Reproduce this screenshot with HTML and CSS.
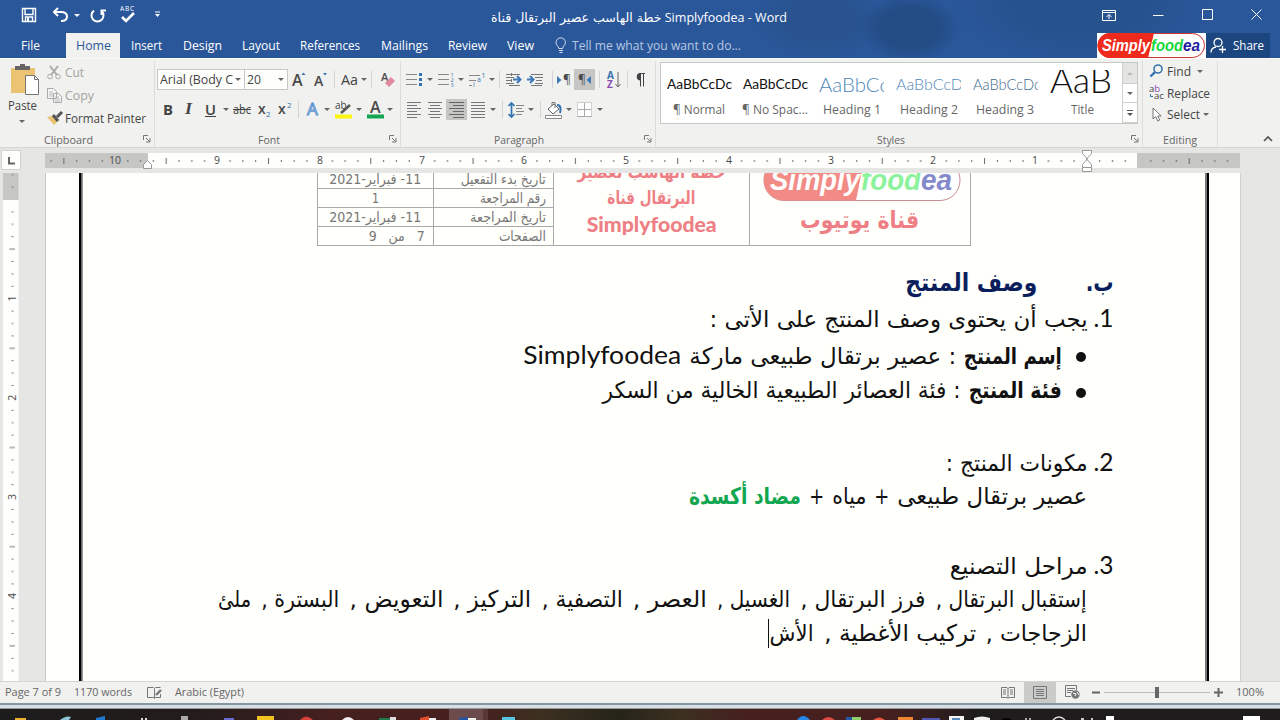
FILE: index.html
```html
<!DOCTYPE html>
<html lang="en">
<head>
<meta charset="utf-8">
<title>Simplyfoodea - Word</title>
<link rel="stylesheet" href="styles.css">
</head>
<body>
<div class="app">
  <header class="top">
    <div class="titlebar">
      <svg class="ic" width="16" height="16" viewBox="0 0 16 16"><path d="M1.500 1.500h13v13h-13z M4 1.500v6h8v-6 M4.500 14v-4h7v4" fill="none" stroke="#fff" stroke-width="1.400"/><path d="M6 11h2v3h-2z" fill="#fff"/></svg>
      <svg class="ic" width="17" height="16" viewBox="0 0 17 16"><path d="M6 1L2 5l4 4M2 5h7c4 0 6 2 6 4.500S13 14 9 14" fill="none" stroke="#fff" stroke-width="2"/></svg>
      <i class="caret light"></i>
      <svg class="ic" width="17" height="17" viewBox="0 0 17 17"><path d="M4.500 4A6 6 0 1 0 12 3.600M4.500 8V3.500H0" fill="none" stroke="#fff" stroke-width="2" transform="translate(17 0)scale(-1 1)"/></svg>
      <svg class="ic" width="17" height="20" viewBox="0 0 17 20"><text x="1" y="6" font-size="6.500" textLength="14" fill="#fff">ABC</text><path d="M3 12l4 4 8-8" fill="none" stroke="#fff" stroke-width="2.600"/></svg>
      <svg class="ic" width="8" height="8"><path d="M1 1h5" stroke="#fff"/><path d="M1 3h5l-2.500 3z" fill="#fff"/></svg>
      <div class="doc-title" dir="ltr"><span class="fit" data-w="296"><bdi class="ar">خطة الهاسب عصير البرتقال قناة</bdi> Simplyfoodea - Word</span></div>
      <svg class="ic" width="15" height="12"><path d="M.5 1.500h13v10H.5zM.5 3.500h13M7 10V5.500M4.500 8L7 5.500 9.500 8" fill="none" stroke="#fff"/></svg>
      <svg class="ic" width="11" height="12"><path d="M0 6.500h10.500" stroke="#fff"/></svg>
      <svg class="ic" width="12" height="12"><path d="M.5 .5h10v10H.5z" fill="none" stroke="#fff"/></svg>
      <svg class="ic" width="12" height="12"><path d="M.5 .5l10 10M10.500 .5l-10 10" stroke="#fff"/></svg>
    </div>
    <nav class="tabs">
      <span class="fit" data-w="19">File</span>
      <span class="tab-on"><span class="fit" data-w="35">Home</span></span>
      <span class="fit" data-w="31">Insert</span>
      <span class="fit" data-w="39">Design</span>
      <span class="fit" data-w="38">Layout</span>
      <span class="fit" data-w="60">References</span>
      <span class="fit" data-w="47">Mailings</span>
      <span class="fit" data-w="39">Review</span>
      <span class="fit" data-w="27">View</span>
      <svg class="ic" width="12" height="17"><path d="M3.800 11.500C3.800 9 1 8.500 1 5.500a4.700 4.700 0 0 1 9.400 0c0 3-2.700 3.500-2.700 6zM4 13.500h4M4.500 15.500h3" fill="none" stroke="#d5dfee"/></svg>
      <span class="fit tell" data-w="169">Tell me what you want to do...</span>
      <svg class="brand" width="109" height="25" viewBox="0 0 109 25"><path d="M0 0h109v25H0z" fill="#fff"/><rect x="1" y=".5" width="106.500" height="24" rx="12" fill="#fff" stroke="#c33"/><path d="M13 0h44l-6 25H13a12.500 12.500 0 0 1 0-25z" fill="#ee2a1c"/><g font-family="Liberation Sans" font-size="16" font-weight="bold" font-style="italic"><text x="5" y="17.500" textLength="48" lengthAdjust="spacingAndGlyphs" fill="#fff">Simply</text><text x="54" y="17.500" textLength="32" lengthAdjust="spacingAndGlyphs" fill="#16d83a">food</text><text x="86" y="17.500" textLength="17" lengthAdjust="spacingAndGlyphs" fill="#1c1c9c">ea</text></g></svg>
      <span class="share"><svg class="ic" width="18" height="17"><circle cx="8" cy="5.500" r="4" fill="none" stroke="#fff" stroke-width="1.300"/><path d="M1 15.500c0-3 2-5 5-5.500M9 12.500h7M12.500 9v7" fill="none" stroke="#fff" stroke-width="1.300"/></svg><span class="fit" data-w="31">Share</span></span>
    </nav>
  </header>

  <section class="ribbon">
    <div class="group clipboard">
      <div class="g-body clip-body">
        <div class="paste">
          <svg width="32" height="34"><path d="M1 5h24v25H1z" fill="#ecc373"/><path d="M5 3h5V1h5v2h5v4H5z" fill="#666"/><path d="M15.500 12.500h9l4 4v15h-13z" fill="#fff" stroke="#777"/><path d="M24.500 12.500v4h4" fill="none" stroke="#777"/></svg>
          <span class="fit" data-w="29">Paste</span>
          <i class="caret"></i>
        </div>
        <div class="clip-list">
          <div class="off"><svg width="15" height="15"><path d="M3 1l7 9M11 1L4 10" stroke="#aaa" stroke-width="2"/><circle cx="3" cy="11.500" r="2.300" fill="none" stroke="#aaa"/><circle cx="11" cy="11.500" r="2.300" fill="none" stroke="#aaa"/></svg><span class="fit" data-w="19">Cut</span></div>
          <div class="off"><svg width="15" height="15"><path d="M.5 .5h6l3 3v7h-9zM6.500 5.500h5l3 3v6h-8z" fill="#f4f4f3" stroke="#aaa"/><path d="M2 4h4M2 6h4M2 8h4M8 9h4M8 11h5M8 13h5" stroke="#bbb"/></svg><span class="fit" data-w="29">Copy</span></div>
          <div><svg width="16" height="15"><path d="M0 6l6-1 5 5-4 4z" fill="#ecc373"/><path d="M6 4l5 6M10 6l5-5" stroke="#555" stroke-width="3"/></svg><span class="fit" data-w="81">Format Painter</span></div>
        </div>
      </div>
      <div class="g-foot"><span class="fit" data-w="49">Clipboard</span><svg class="launch" width="8" height="8"><use href="#launch"/></svg></div>
    </div>

    <div class="group font">
      <div class="g-body">
        <div class="row font1">
          <span class="combo"><span class="fit" data-w="73">Arial (Body C</span><i class="caret"></i></span>
          <span class="combo"><span class="fit" data-w="14">20</span><i class="caret"></i></span>
          <svg width="16" height="18"><text class="b" x="0" y="15" font-size="16">A</text><path d="M9.500 4h4l-2-2.500z" fill="#3572b0"/></svg>
          <svg width="16" height="18"><text class="b" x="0" y="15" font-size="14">A</text><path d="M9 2h4l-2 2.500z" fill="#3572b0"/></svg>
          <i class="sep"></i>
          <span class="fit big" data-w="17">Aa</span><i class="caret"></i>
          <i class="sep"></i>
          <svg width="15" height="16"><text x="0" y="9" font-size="11" class="b">A</text><path d="M4 11l6-6 4 4-6 6z" fill="#e28aa0"/></svg>
        </div>
        <div class="row font2">
          <b class="fit glyph" data-w="10">B</b>
          <i class="fit glyph serif" data-w="7">I</i>
          <u class="fit glyph" data-w="11">U</u><i class="caret"></i>
          <s class="fit" data-w="18">abc</s>
          <svg width="14" height="18"><text class="b" x="0" y="13" font-size="14">x</text><text x="8" y="16" font-size="8" fill="#3572b0">2</text></svg>
          <svg width="15" height="18"><text class="b" x="0" y="13" font-size="14">x</text><text x="9" y="7" font-size="8" fill="#3572b0">2</text></svg>
          <i class="sep"></i>
          <svg width="15" height="17"><text x="1" y="14" font-size="17" fill="#fff" stroke="#5b93cf">A</text></svg><i class="caret"></i>
          <svg width="18" height="18"><text x="0" y="8" font-size="10" fill="#444">ab</text><path d="M6 12l9-8" stroke="#555" stroke-width="2.400"/><path d="M0 13.500h17v4H0z" fill="#fcf510"/></svg><i class="caret"></i>
          <svg width="18" height="18"><text x="3" y="12" font-size="16" class="b">A</text><path d="M0 13.500h17v4H0z" fill="#12a650"/></svg><i class="caret"></i>
        </div>
      </div>
      <div class="g-foot"><span class="fit" data-w="22">Font</span><svg class="launch" width="8" height="8"><use href="#launch"/></svg></div>
    </div>

    <div class="group para">
      <div class="g-body">
        <div class="row para1">
          <svg width="17" height="16"><path d="M0 2.500h11M0 7.500h11M0 12.500h11" stroke="#888"/><path d="M13 1h3v3h-3zM13 6h3v3h-3zM13 11h3v3h-3z" fill="#3572b0"/></svg><i class="caret"></i>
          <svg width="17" height="16"><path d="M0 2.500h11M0 7.500h11M0 12.500h11" stroke="#888"/><text x="12.500" y="5" font-size="5.500" fill="#3572b0">1</text><text x="12.500" y="10" font-size="5.500" fill="#3572b0">2</text><text x="12.500" y="15" font-size="5.500" fill="#3572b0">3</text></svg><i class="caret"></i>
          <svg width="17" height="16"><path d="M0 3.500h11M0 8.500h7M0 13.500h3" stroke="#888"/><text x="12.500" y="6" font-size="7" fill="#3572b0">1</text><text x="8" y="10" font-size="7" fill="#3572b0">a</text><text x="4" y="15" font-size="7" fill="#3572b0">i</text></svg><i class="caret"></i>
          <i class="sep"></i>
          <svg width="16" height="14"><path d="M0 1.500h14M0 4.500h8M0 7.500h6M0 10.500h8M3 12.500h11" stroke="#777"/><path d="M5.500 0v14" stroke="#777" stroke-dasharray="1 1"/><path d="M7 6.500h7M11 3l3.500 3.500L11 10" fill="none" stroke="#3f78b8" stroke-width="2"/></svg>
          <svg width="16" height="14"><path d="M4 1.500h12M8 4.500h8M9 7.500h6M8 10.500h8M4 12.500h11" stroke="#777"/><path d="M0 6.500h6M3 3l3.500 3.500L3 10" fill="none" stroke="#3f78b8" stroke-width="2"/></svg>
          <i class="sep"></i>
          <svg width="15" height="14"><path d="M0 3v8l4.500-4z" fill="#3f78b8"/><text x="6" y="11" font-size="12">¶</text></svg>
          <span class="on"><svg width="15" height="14"><path d="M14 3v8L9.500 7z" fill="#3f78b8"/><text x="1" y="11" font-size="12">¶</text></svg></span>
          <i class="sep"></i>
          <svg width="15" height="18"><text x="0" y="8" font-size="10" font-weight="bold" fill="#3572b0">A</text><text x="0" y="17" font-size="10" font-weight="bold" fill="#8a4bb0">Z</text><path d="M11 1v15M8.500 13l2.500 3 2.500-3" fill="none" stroke="#666"/></svg>
          <i class="sep"></i>
          <svg width="12" height="18"><path d="M5 2.500h6M6.500 2.500v13M9.500 2.500v13" stroke="#444"/><path d="M6.500 2v7.500a3.700 3.700 0 0 1 0-7.500z" fill="#444"/></svg>
        </div>
        <div class="row para2">
          <svg width="15" height="16"><path d="M0 .5h14M0 3.500h10M0 6.500h14M0 9.500h10M0 12.500h14M0 15.500h10" stroke="#777"/></svg>
          <svg width="15" height="16"><path d="M0 .5h14M2 3.500h10M0 6.500h14M2 9.500h10M0 12.500h14M2 15.500h10" stroke="#777"/></svg>
          <span class="on"><svg width="15" height="16"><path d="M0 .5h15M4 3.500h11M0 6.500h15M4 9.500h11M0 12.500h15M4 15.500h11" stroke="#666"/></svg></span>
          <svg width="15" height="16"><path d="M0 .5h14M0 3.500h14M0 6.500h14M0 9.500h14M0 12.500h14M0 15.500h14" stroke="#777"/></svg><i class="caret"></i>
          <i class="sep"></i>
          <svg width="17" height="16"><path d="M3.500 1v14M.5 4l3-3 3 3M.5 12l3 3 3-3" fill="none" stroke="#3572b0" stroke-width="1.700"/><path d="M8 3.500h8M8 6.500h6M8 9.500h8M8 12.500h6" stroke="#888"/></svg><i class="caret"></i>
          <i class="sep"></i>
          <svg width="18" height="18"><path d="M3 8l6-5 5 5-6 5z" fill="#fff" stroke="#666"/><path d="M7 5V1.500h3V7" fill="none" stroke="#777"/><path d="M12 4c4 0 4 4 3 8" fill="none" stroke="#3572b0" stroke-width="2"/><path d="M.5 14.500h16v3H.5z" fill="#fff" stroke="#888"/></svg><i class="caret"></i>
          <svg width="16" height="16"><path d="M.5 .5h14v14H.5z" fill="#fff" stroke="#aaa" stroke-dasharray="1 1"/><path d="M7.500 1v13M1 7.500h13M0 14.500h15" stroke="#aaa"/></svg><i class="caret"></i>
        </div>
      </div>
      <div class="g-foot"><span class="fit" data-w="50">Paragraph</span><svg class="launch" width="8" height="8"><use href="#launch"/></svg></div>
    </div>

    <div class="group styles">
      <div class="gallery">
        <div class="style"><div class="sample"><span class="fit" data-w="65">AaBbCcDc</span></div><span class="fit" data-w="52">¶ Normal</span></div>
        <div class="style"><div class="sample"><span class="fit" data-w="65">AaBbCcDc</span></div><span class="fit" data-w="66">¶ No Spac...</span></div>
        <div class="style"><div class="sample h1"><span class="fit" data-w="70">AaBbCc</span></div><span class="fit" data-w="58">Heading 1</span></div>
        <div class="style"><div class="sample h2"><span class="fit" data-w="67">AaBbCcD</span></div><span class="fit" data-w="58">Heading 2</span></div>
        <div class="style"><div class="sample h3"><span class="fit" data-w="68">AaBbCcDc</span></div><span class="fit" data-w="58">Heading 3</span></div>
        <div class="style"><div class="sample ttl"><span class="fit" data-w="62">AaB</span></div><span class="fit" data-w="23">Title</span></div>
        <div class="scroll"><span class="dim"><i class="caret up"></i></span><span><i class="caret"></i></span><span><svg width="7" height="8"><path d="M0 1.500h6" stroke="#555"/><path d="M0 4h6l-3 3z" fill="#555"/></svg></span></div>
      </div>
      <div class="g-foot"><span class="fit" data-w="28">Styles</span><svg class="launch" width="8" height="8"><use href="#launch"/></svg></div>
    </div>

    <div class="group editing">
      <div class="g-body edit-list">
        <div><svg width="16" height="15"><circle cx="9" cy="5" r="4" fill="none" stroke="#3572b0" stroke-width="1.600"/><path d="M6 8L1.500 12.500" stroke="#3572b0" stroke-width="2.400"/></svg><span class="fit" data-w="24">Find</span><i class="caret"></i></div>
        <div><svg width="16" height="16"><text x="0" y="7" font-size="9.500" fill="#444">a<tspan fill="#8a4bb0">b</tspan></text><text x="5" y="14" font-size="9.500" fill="#444">ac</text><path d="M1.500 9v2.500H4" fill="none" stroke="#3572b0"/></svg><span class="fit" data-w="43">Replace</span></div>
        <div><svg width="14" height="15"><path d="M4 1v11l2.700-2.500 2 4.500 2-1-2-4h3.500z" fill="#fff" stroke="#777"/></svg><span class="fit" data-w="33">Select</span><i class="caret near"></i></div>
      </div>
      <div class="g-foot"><span class="fit" data-w="34">Editing</span></div>
    </div>
    <div class="collapse"><svg width="10" height="7"><path d="M1 6l4-4 4 4" fill="none" stroke="#555" stroke-width="1.700"/></svg></div>
  </section>

  <div class="hruler">
    <div class="corner"><svg width="18" height="18"><path d="M7 6v6.500h6" fill="none" stroke="#666" stroke-width="2"/></svg></div>
    <svg width="1196" height="26" viewBox="45 0 1196 26">
      <defs>
        <pattern id="ht" x="1138" y="0" width="102.300" height="26" patternUnits="userSpaceOnUse"><path d="M12.800 12v2M25.600 12v2M38.400 12v2M51.200 10v6M64 12v2M76.800 12v2M89.600 12v2" stroke="#666"/></pattern>
        <symbol id="launch" overflow="visible"><path d="M.5 5V.5H5M3 3l3.500 3.500M7 3v4H3" fill="none" stroke="#777"/></symbol>
      </defs>
      <path d="M45 5h1195v15H45z" fill="#c6c6c4"/><path d="M148 5h989v15H148z" fill="#fefefc"/>
      <path d="M48 5h1087v15H48zM1142 5h92v15h-92z" fill="url(#ht)"/>
      <g font-size="10.500" text-anchor="middle"><text x="115" y="16">10</text><text x="217" y="16">9</text><text x="320" y="16">8</text><text x="422" y="16">7</text><text x="524" y="16">6</text><text x="626" y="16">5</text><text x="729" y="16">4</text><text x="831" y="16">3</text><text x="933" y="16">2</text><text x="1035" y="16">1</text></g>
      <path d="M143.500 20.500v-4l4-4 4 4v4z" fill="#fff" stroke="#999"/>
      <path d="M1082.500 2.500h9v3l-4.500 5-4.500-5zM1082.500 19.500v-3l4.500-5 4.500 5v3zM1082.500 19.500h9v4h-9z" fill="#fff" stroke="#999"/>
    </svg>
  </div>

  <main class="work">
    <svg class="vruler" width="45" height="508" viewBox="0 173 45 508">
      <defs><pattern id="vt" x="0" y="199.500" width="20" height="99.200" patternUnits="userSpaceOnUse"><path d="M11.500 12.400h2M11.500 24.800h2M11.500 37.200h2M9.500 49.600h5.500M11.500 62h2M11.500 74.400h2M11.500 86.800h2" stroke="#777"/></pattern></defs>
      <path d="M3 173h15.500v27H3z" fill="#c6c6c4"/><path d="M3 200h15.500v481H3z" fill="#fefefc"/>
      <path d="M0 174h20v507H0z" fill="url(#vt)"/>
      <g font-size="10.500" text-anchor="middle"><text transform="translate(15.500 298.500)rotate(-90)">1</text><text transform="translate(15.500 397.700)rotate(-90)">2</text><text transform="translate(15.500 497)rotate(-90)">3</text><text transform="translate(15.500 596)rotate(-90)">4</text></g>
    </svg>
    <article class="page" dir="rtl">
      <div class="edge right"></div>
      <div class="sheet">
        <div class="head">
          <div class="cell logo-cell">
            <svg width="192" height="29" viewBox="1 10 192 29" direction="ltr"><rect x="1" y="-3" width="196" height="40.500" rx="20" fill="#fff" stroke="#c98a92"/><path d="M21-3h80l-8 40.500H21A20 20 0 0 1 21-3z" fill="#f28b86"/><g font-family="Liberation Sans" font-size="29" font-weight="bold" font-style="italic"><text x="7" y="27" textLength="90" lengthAdjust="spacingAndGlyphs" fill="#fff">Simply</text><text x="98" y="27" textLength="60" lengthAdjust="spacingAndGlyphs" fill="#8df29c">food</text><text x="158" y="27" textLength="31" lengthAdjust="spacingAndGlyphs" fill="#8489cb">ea</text></g></svg>
            <span class="fit channel" data-w="119">قناة يوتيوب</span>
          </div>
          <div class="cell plan"><span class="fit" data-w="148">خطة الهاسب لعصير</span><span class="fit" data-w="88">البرتقال قناة</span><span class="fit lat" data-w="130">Simplyfoodea</span></div>
          <div class="meta">
            <div><span class="fit" data-w="85">تاريخ بدء التفعيل</span></div><div class="mid"><span class="fit" data-w="92">11- فبراير-2021</span></div>
            <div><span class="fit" data-w="66">رقم المراجعة</span></div><div class="mid"><span class="fit" data-w="7">1</span></div>
            <div><span class="fit" data-w="76">تاريخ المراجعة</span></div><div class="mid"><span class="fit" data-w="92">11- فبراير-2021</span></div>
            <div><span class="fit" data-w="47">الصفحات</span></div><div class="mid pages"><span class="fit" data-w="56">7 &nbsp; من &nbsp; 9</span></div>
          </div>
        </div>
        <div class="line title"><span class="fit mark" data-w="28">ب.</span><span class="fit" data-w="132">وصف المنتج</span></div>
        <div class="line first"><span class="fit num" data-w="20">1.</span><span class="fit" data-w="378">يجب أن يحتوى وصف المنتج على الأتى :</span></div>
        <div class="line item"><i class="dot"></i><b class="fit" data-w="98">إسم المنتج</b><span class="fit" data-w="267">: عصير برتقال طبيعى ماركة</span><span class="fit lat" data-w="158">Simplyfoodea</span></div>
        <div class="line item"><i class="dot"></i><b class="fit" data-w="93">فئة المنتج</b><span class="fit" data-w="358">: فئة العصائر الطبيعية الخالية من السكر</span></div>
        <div class="line second"><span class="fit num" data-w="20">2.</span><span class="fit" data-w="142">مكونات المنتج :</span></div>
        <div class="line body sum"><span class="fit" data-w="190">عصير برتقال طبيعى</span><span class="fit" data-w="15">+</span><span class="fit" data-w="34">مياه</span><span class="fit" data-w="15">+</span><b class="fit green" data-w="112">مضاد أكسدة</b></div>
        <div class="line third"><span class="fit num" data-w="20">3.</span><span class="fit" data-w="138">مراحل التصنيع</span></div>
        <div class="line body steps"><span class="fit" data-w="151">إستقبال البرتقال ,</span><span class="fit" data-w="125">فرز البرتقال ,</span><span class="fit" data-w="73">الغسيل ,</span><span class="fit" data-w="74">العصر ,</span><span class="fit" data-w="81">التصفية ,</span><span class="fit" data-w="78">التركيز ,</span><span class="fit" data-w="94">التعويض ,</span><span class="fit" data-w="78">البسترة ,</span><span class="fit" data-w="33">ملئ</span></div>
        <div class="line body steps last"><span class="fit" data-w="101">الزجاجات ,</span><span class="fit" data-w="152">تركيب الأغطية ,</span><span class="fit" data-w="44">الأش</span><i class="cursor"></i></div>
      </div>
      <div class="edge left"></div>
    </article>
  </main>

  <footer class="status">
    <span class="fit" data-w="56">Page 7 of 9</span>
    <span class="fit" data-w="58">1170 words</span>
    <svg width="16" height="14"><path d="M.5 1.500h6l1 1v10l-1-1h-6zM7.500 2.500l1-1h5M7.500 12.500l1-1h5V8" fill="none" stroke="#777"/><path d="M9 9l5-5" stroke="#777" stroke-width="2.400"/></svg>
    <span class="fit" data-w="69">Arabic (Egypt)</span>
    <svg width="15" height="13"><path d="M.5 1.500h5.500l1 1 1-1h5.500v10H8l-1 1-1-1H.5zM7 2v10M2 4h3M2 6h3M2 8h3M9 4h3M9 6h3M9 8h3" fill="none" stroke="#777"/></svg>
    <span class="view-on"><svg width="15" height="13"><path d="M.5 .5h13v12H.5zM3 3.500h8M3 5.500h8M3 7.500h8M3 9.500h8" fill="none" stroke="#777"/></svg></span>
    <svg width="16" height="15"><path d="M6 11.500H.5V.5h11V5M2 3.500h8M2 5.500h6M2 7.500h4" fill="none" stroke="#777"/><circle cx="10.500" cy="9.500" r="4.200" fill="#777"/><path d="M8 8l3 1-1 2M12 7l2 3" stroke="#fff" fill="none"/></svg>
    <svg width="132" height="13"><path d="M0 6.500h8M122 6.500h9M126.500 2v9" stroke="#666" stroke-width="2"/><path d="M12 6.500h106" stroke="#bbb"/><path d="M63 1h4v11h-4z" fill="#666"/></svg>
    <span class="fit" data-w="28">100%</span>
  </footer>
  <div class="winedge"></div>
  <div class="taskbar">
    <svg width="1280" height="11"><path d="M449 0h34v11h-34z" fill="#6b4b4c"/><path d="M483 0h5v11h-5z" fill="#5a3838"/>
      <path d="M15 9h11v2H15z" fill="#eab030"/><path d="M60 11q6-5 11-3l-2 3z" fill="#8fc4d8"/><path d="M96 9l9-2v4h-9z" fill="#1f78d0"/><path d="M141 9h2v2h-2zM145 9h2v2h-2z" fill="#ddd"/><path d="M181 7h7v4h-7z" fill="#aaa"/><path d="M224 9h10v2h-10z" fill="#6a6bd0"/><path d="M257 7h17v4h-17z" fill="#f2c320"/><path d="M300 11q6-7 13 0z" fill="#d9423c"/><path d="M342 11q6-6 12 0z" fill="#eee"/><path d="M379 9h11v2h-11z" fill="#1f7a4c"/><path d="M390 8h6v3h-6z" fill="#ddd"/><path d="M420 9l9-2v4h-9z" fill="#e34f2a"/><path d="M429 9h7v2h-7z" fill="#eee"/><path d="M459 9l9-1v3h-9z" fill="#2455a5"/><path d="M468 9h8v2h-8z" fill="#eee"/><path d="M502 8h13v3h-13z" fill="#55c5e0"/><path d="M797 11q6-8 13 0z" fill="#2386e8"/><path d="M822 11q6-6 13 0z" fill="#e04a40"/><path d="M846 8h6v3h-6z" fill="#2a58a8"/><path d="M852 8h9v3h-9z" fill="#8ccf6a"/><path d="M873 11q6-5 12 0z" fill="#e9583e"/><path d="M898 8h15v3h-15z" fill="#ee8434"/><path d="M922 9h18v2h-18z" fill="#5158b8"/><path d="M949 7h15v4h-15z" fill="#f4f4f4"/><path d="M952 9h8v2h-8z" fill="#5d8dc0"/><path d="M974 9q8-3 16 0v2h-16z" fill="#eee"/><path d="M1001 11q6-4 11 0z" fill="#000"/><path d="M1025 9h2v2h-2zM1029 9h2v2h-2z" fill="#aaa"/><path d="M1053 11q6-6 12 0" fill="none" stroke="#ddd" stroke-width="1.500"/><path d="M1081 9h3v2h-3zM1091 9h2v2h-2z" fill="#ccc"/><path d="M1106 7h8v4h-8zM1243 7h17v4h-17z" fill="#fff"/></svg>
  </div>
</div>
<script src="fit.js"></script>
</body>
</html>
```

FILE: styles.css
```css
* { box-sizing: border-box; }
body { margin: 0; font-family: "Open Sans", "Noto Sans", "DejaVu Sans", sans-serif; font-size: 12px; color: #444; overflow: hidden; }
svg { display: block; flex: none; overflow: visible; }
svg text:not([fill]) { fill: #4a4a4a; }
svg text.b { font-weight: 600; }
.app { width: 1280px; height: 720px; display: flex; flex-direction: column; overflow: hidden; background: #e6e6e4; }
.fit { display: inline-block; white-space: nowrap; flex: none; justify-self: start; transform-origin: 0 50%; }
[dir="rtl"] .fit { transform-origin: 100% 50%; }

.top { height: 58px; flex: none; color: #fff; background: radial-gradient(ellipse 50px 34px at 910px 28px, #244d86 60%, transparent 100%), radial-gradient(ellipse 130px 60px at 1080px 5px, #26528e 50%, transparent 100%), radial-gradient(ellipse 70px 40px at 820px 20px, #28538f 50%, transparent 100%), #2a579a; }
.titlebar { height: 33px; padding: 0 0 3px 21px; display: grid; align-items: center; grid-template-columns: 31px 22px 15px 30px 35px 337px 611px 51px 49px 49px 20px; }
.doc-title { font-size: 12.5px; padding-top: 4px; }
.ar { font-family: "DejaVu Sans", sans-serif; }
.tabs { height: 25px; padding-left: 21px; display: grid; align-items: center; grid-template-columns: 45px 65px 52px 59px 58px 81px 67px 59px 48px 17px 525px 109px 64px; font-size: 12.5px; }
.tab-on { height: 25px; width: 54px; padding-left: 10px; display: flex; align-items: center; background: #f1f1ef; color: #2a579a; }
.tell { color: #b8c8e2; }
.share { height: 25px; padding-left: 4px; display: flex; gap: 5px; align-items: center; background: #1c4680; }
.caret { width: 0; height: 0; display: block; flex: none; border: 3px solid transparent; border-top-color: #666; border-bottom: 0; }
.caret.up { border-top: 0; border-bottom: 3px solid #bbb; }
.caret.light { border-top-color: #fff; }

.ribbon { height: 90px; flex: none; display: grid; grid-template-columns: 155px 246px 255px 487px 75px 62px; background: #f1f1ef; border-top: 1px solid #fafafa; border-bottom: 1px solid #d6d6d4; padding-top: 2px; }
.group { border-right: 1px solid #dcdcda; height: 86px; display: flex; flex-direction: column; }
.g-body { height: 70px; flex: none; }
.g-foot { display: grid; align-items: center; height: 16px; flex: none; color: #666; font-size: 11px; }
.clip-body { display: grid; grid-template-columns: 47px 100px; }
.paste { padding: 2px 0 0 8px; display: flex; flex-direction: column; align-items: flex-start; }
.paste svg { margin-left: 2px; }
.paste .caret { margin: 5px 0 0 11px; }
.paste .fit { line-height: 18px; }
.clip-list div { height: 23px; display: grid; grid-template-columns: 18px 82px; align-items: center; }
.off { color: #a3a3a1; }
.clipboard .g-foot { padding-left: 44px; grid-template-columns: 99px 10px; }
.font .g-foot { padding-left: 103px; grid-template-columns: 131px 10px; }
.para .g-foot { padding-left: 93px; grid-template-columns: 150px 10px; }
.styles .g-foot { padding-left: 221px; grid-template-columns: 254px 10px; }
.editing .g-foot { padding-left: 20px; }
.row { height: 31px; display: grid; align-items: center; }
.font1 { padding-left: 2px; margin-top: 3px; grid-template-columns: 88px 47px 22px 20px 7px 20px 10px 10px 20px; }
.font2 { margin-top: -1px; padding-left: 8px; grid-template-columns: 22px 20px 18px 10px 25px 20px 20px 8px 18px 11px 21px 11px 20px 10px; }
.combo { display: flex; align-items: center; justify-content: space-between; height: 21px; background: #fefefd; border: 1px solid #c8c8c6; padding: 0 3px 0 2px; }
.combo + .combo { margin-right: 4px; border-left: 0; }
.sep { width: 1px; height: 17px; background: #d4d4d2; }
.big { font-size: 14px; }
.glyph { font-size: 15px; line-height: 18px; padding-bottom: 1px; }
.serif { font-family: "Liberation Serif", serif; font-weight: bold; font-size: 17px; }
u.glyph { font-weight: 600; }
.para1 { margin-top: 3px; padding-left: 5px; grid-template-columns: 21px 11px 20px 11px 20px 10px 7px 21px 25px 5px 17px 25px 8px 20px 7px 12px; }
.para2 { margin-top: -1px; padding-left: 6px; grid-template-columns: 21px 18px 25px 19px 12px 6px 20px 12px 5px 21px 11px 20px 10px; }
.on { width: 21px; height: 21px; background: #c6c6c4; display: grid; place-items: center; }
.gallery { margin: 1px 0 8px 4px; width: 478px; height: 62px; flex: none; background: #fff; border: 1px solid #c8c8c6; display: grid; grid-template-columns: 76px 76px 77px 77px 76px 79px 15px; font-size: 12px; }
.styles .g-foot { margin-top: -1px; }
.style { display: flex; flex-direction: column; align-items: center; padding-top: 7px; color: #666; }
.style > .fit { line-height: 16px; margin-top: 2px; }
.sample { width: 65px; height: 30px; line-height: 29px; overflow: hidden; font-size: 13px; color: #111; font-family: "Lato", sans-serif; }
.h1, .h2, .h3 { color: #4f88ba; font-weight: 300; font-size: 19px; }
.h2 { font-size: 16.5px; }
.h3 { color: #40698c; font-size: 15px; }
.ttl { font-size: 35px; font-weight: 300; line-height: 19px; }
.ttl .fit { line-height: 19px; }
.scroll { border-left: 1px solid #d0d0ce; display: grid; grid-template-rows: 21px 19px 20px; }
.scroll span { display: grid; place-items: center; border-bottom: 1px solid #d0d0ce; }
.scroll .dim { background: #e4e4e2; }
.edit-list { padding: 0 0 0 6px; }
.edit-list div { height: 21.500px; display: grid; align-items: center; grid-template-columns: 18px auto 1fr; column-gap: 0; }
.edit-list .caret { margin-left: 6px; }
.edit-list .near { margin-left: 3px; }
.collapse { padding: 74px 0 0 45px; }

.hruler { height: 25px; flex: none; display: grid; grid-template-columns: 45px 1196px; background: #e6e6e4; }
.corner { width: 20px; height: 20px; margin: 2px 0 0 1px; border: 1px solid #d2d2d0; background: #fefefc; }
.work { height: 508px; flex: none; display: flex; overflow: hidden; }
.page { width: 1196px; background: #fffffc; border-left: 1px solid #c8c8c6; border-right: 1px solid #d0d0ce; display: flex; font-family: "DejaVu Sans", sans-serif; }
.edge { width: 4px; flex: none; background: linear-gradient(90deg, #777 0 2px, #000 2px); }
.edge.left { background: linear-gradient(90deg, #000 0 2px, #666 2px 3px, #999 3px); }
.right { margin-right: 31px; }
.left { margin-left: 33px; }
.sheet { flex: 1; min-width: 0; }
.head { margin-right: 234px; width: 654px; height: 73px; display: grid; grid-template-columns: 221px 196px 236px; border: 1px solid #aaa; border-top: 0; color: #777; font-size: 14px; overflow: hidden; }
.cell { border-left: 1px solid #aaa; display: flex; flex-direction: column; align-items: center; overflow: hidden; }
.channel { color: #ee8085; font-weight: bold; font-size: 24px; line-height: 36px; }
.plan { color: #ee8085; font-weight: bold; font-size: 18px; line-height: 26px; justify-content: flex-end; padding-bottom: 8px; }
.plan .fit { height: 26px; }
.plan .lat { font-size: 20px; font-weight: 900; }
.lat { font-family: "Lato", sans-serif; }
.meta { display: grid; grid-template-columns: 120px 115px; grid-template-rows: 16px 19px 19px 18px; }
.meta div { display: flex; align-items: flex-end; padding-right: 7px; border-bottom: 1px solid #aaa; border-left: 1px solid #aaa; line-height: 17px; }
.meta div:nth-last-child(-n+2) { border-bottom: 0; }
.meta .mid { justify-content: center; padding: 0; border-left: 0; }
.meta .pages { justify-content: flex-start; padding-right: 8px; }
.line { height: 36px; line-height: 36px; display: flex; align-items: baseline; padding-right: 92px; color: #111; font-size: 23px; }
.line.title { margin-top: 18px; height: 35px; line-height: 38px; padding-right: 91px; color: #0b1e5c; font-weight: bold; font-size: 25px; }
.line.first { height: 37px; }
.mark { margin-left: 49px; }
.num { font-family: "Lato", sans-serif; font-size: 25px; }
.num + .fit { margin-right: 5px; }
.line.item { padding-right: 119px; gap: 8px; }
.item b { margin-right: 6px; }
.line .lat { font-size: 25px; }
.dot { width: 10px; height: 10px; margin-top: 5px; border-radius: 50%; background: #111; align-self: center; }
.second { margin-top: 35px; }
.third { margin-top: 33px; }
.line.body { height: 34px; line-height: 34px; padding-right: 118px; gap: 8px; }
.line.steps { gap: 10.3px; }
.green { color: #12a650; }
.cursor { width: 1px; height: 29px; margin-right: -10px; background: #111; align-self: center; }

.status { height: 22px; flex: none; border-top: 1px solid #d4d4d2; background: #f1f1ef; padding-left: 5px; display: grid; align-items: center; grid-template-columns: 69px 73px 28px 826px 23px 41px 27px 144px 44px; grid-template-rows: 21px; font-size: 11px; color: #666; }
.status .fit { line-height: 17px; padding-bottom: 2px; }
.view-on { width: 32px; height: 21px; background: #cacac8; display: grid; place-items: center; }
.winedge { height: 6px; flex: none; background: linear-gradient(#8496a4 0 2px, #d8dfe4 2px 5px, #999 5px); }
.taskbar { height: 11px; flex: none; background: linear-gradient(90deg, #1c1c1c 0, #241c1c 200px, #45201f 330px, #45201f 480px, #3c3020 540px, #26241a 620px, #3c3020 680px, #45201f 740px, #45201f 890px, #1e1c1d 980px, #1e1c1d); }
```

FILE: fit.js
```js
// Scale each label horizontally so that it occupies its measured width.
document.querySelectorAll('.fit').forEach(function (el) {
  var natural = el.offsetWidth;
  var target = Number(el.dataset.w);
  var r = el.getBoundingClientRect().width || natural;
  var old = parseFloat(getComputedStyle(el).marginInlineEnd) || 0;
  el.style.transform = 'scaleX(' + target / r + ')';
  el.style.marginInlineEnd = (old + target - r) + 'px';
});
```
